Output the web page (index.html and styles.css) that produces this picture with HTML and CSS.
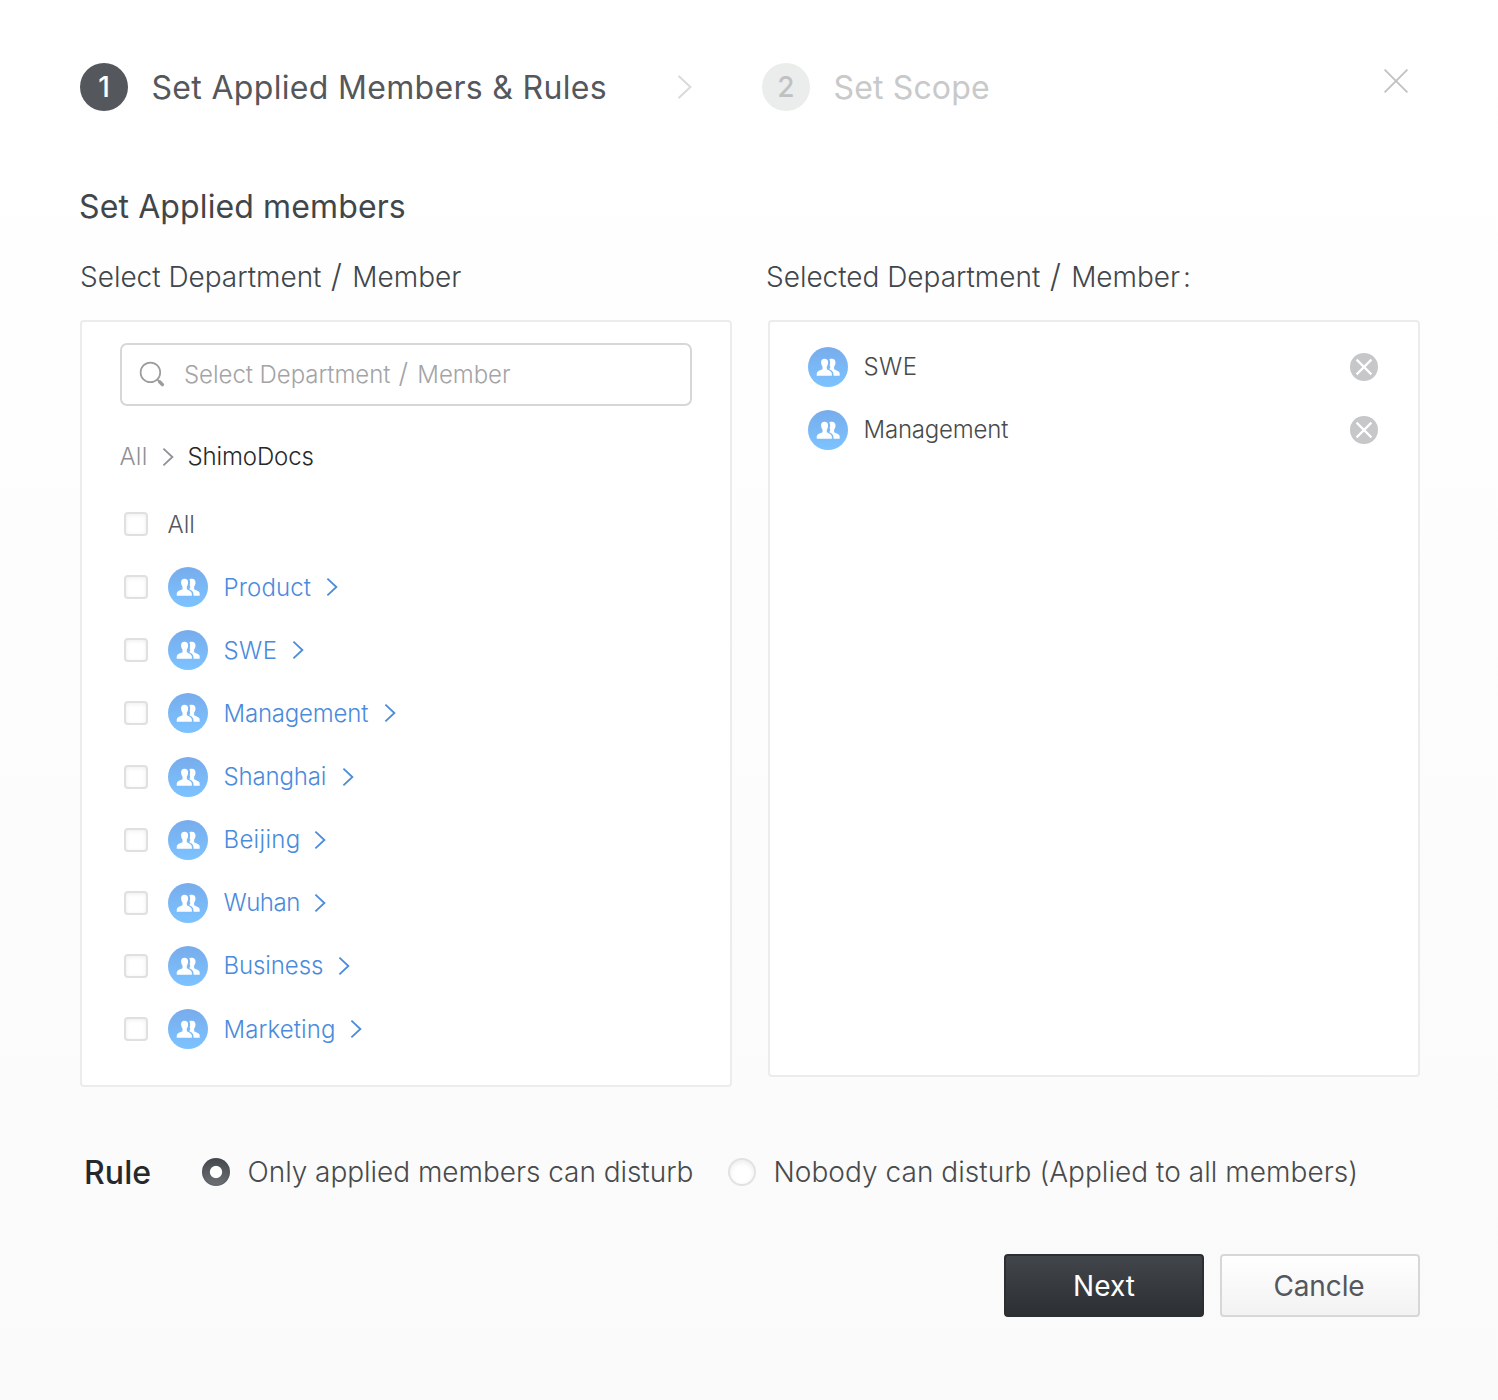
FILE: index.html
```
<!DOCTYPE html>
<html lang="en">
<head>
<meta charset="utf-8">
<title>Set Applied Members &amp; Rules</title>
<link rel="stylesheet" href="styles.css">
</head>
<body>
<svg class="defs" aria-hidden="true">
  <symbol id="chevron" viewBox="0 0 12 20"><path d="M1.4 1.6 10.4 10 1.4 18.4"/></symbol>
  <symbol id="people" viewBox="0 0 40 40">
    <path d="M16.5 11.7c-2.2 0-3.6 1.3-3.4 3.8.1 1.8.6 3 1.4 4.1v2.6c-1.8.9-4.9 1.5-5.6 3.6-.2.6-.2 1.6-.2 3h15.2c0-1.4 0-2.3-.2-2.8-.7-2-3-2.8-4.9-3.8v-2.6c.8-1.1 1.2-2.3 1.3-4.1.2-2.5-1.3-3.8-3.6-3.8z"/>
    <path d="M21.3 12.4c.9-.6 1.9-.6 2.6-.6 2.6.1 3.7 1.6 3.6 3.9-.1 1.8-.6 2.9-1.4 3.9v2.6c1.8 1 4.7 1.6 5.4 3.4.2.6.2 1.8.2 3.2h-6.1c0-3.5-.6-4.5-3.4-6-.8-.5-.9-.9-.4-1.6.9-1.2.3-2-.1-3 .6-2.2.7-4.2-.4-5.8z"/>
  </symbol>
  <symbol id="cross" viewBox="0 0 28 28"><path d="M6.6 6.6 21.4 21.4M21.4 6.6 6.6 21.4"/></symbol>
</svg>
<main class="dialog">
  <header class="steps">
    <div class="step step-current"><span class="num">1</span><span class="title">Set Applied Members &amp; Rules</span></div>
    <svg class="step-arrow" viewBox="0 0 14 24"><path d="M1.2 1.4 12.4 12 1.2 22.6"/></svg>
    <div class="step step-next"><span class="num">2</span><span class="title">Set Scope</span></div>
    <svg class="close" viewBox="0 0 24 24"><path d="M.6.6 23.4 23.4M23.4.6.6 23.4"/></svg>
  </header>

  <h1 class="heading">Set Applied members</h1>

  <div class="columns">
    <section class="column">
      <h2 class="label">Select Department <span class="slash">/</span> Member</h2>
      <div class="panel panel-source">
        <div class="search">
          <svg class="search-icon" viewBox="0 0 26 26"><circle cx="11.4" cy="11.4" r="9.8"/><path d="M18.4 18.6 20.8 20.8"/><path class="handle" d="M20.6 20.8 23.4 23.6"/></svg>
          <span>Select Department <span class="slash">/</span> Member</span>
        </div>
        <nav class="crumbs"><span class="crumb-root">All</span><svg class="chevron"><use href="#chevron"/></svg><span class="crumb-here">ShimoDocs</span></nav>
        <ul class="list">
          <li class="row"><span class="check"></span><span class="name name-all">All</span></li>
          <li class="row"><span class="check"></span><svg class="avatar"><use href="#people"/></svg><span class="name product">Product</span><svg class="chevron"><use href="#chevron"/></svg></li>
          <li class="row"><span class="check"></span><svg class="avatar"><use href="#people"/></svg><span class="name swe">SWE</span><svg class="chevron"><use href="#chevron"/></svg></li>
          <li class="row"><span class="check"></span><svg class="avatar"><use href="#people"/></svg><span class="name management">Management</span><svg class="chevron"><use href="#chevron"/></svg></li>
          <li class="row"><span class="check"></span><svg class="avatar"><use href="#people"/></svg><span class="name shanghai">Shanghai</span><svg class="chevron"><use href="#chevron"/></svg></li>
          <li class="row"><span class="check"></span><svg class="avatar"><use href="#people"/></svg><span class="name beijing">Beijing</span><svg class="chevron"><use href="#chevron"/></svg></li>
          <li class="row"><span class="check"></span><svg class="avatar"><use href="#people"/></svg><span class="name wuhan">Wuhan</span><svg class="chevron"><use href="#chevron"/></svg></li>
          <li class="row"><span class="check"></span><svg class="avatar"><use href="#people"/></svg><span class="name business">Business</span><svg class="chevron"><use href="#chevron"/></svg></li>
          <li class="row"><span class="check"></span><svg class="avatar"><use href="#people"/></svg><span class="name marketing">Marketing</span><svg class="chevron"><use href="#chevron"/></svg></li>
        </ul>
      </div>
    </section>
    <section class="column">
      <h2 class="label label-selected">Selected Department <span class="slash">/</span> Member<span class="colon">:</span></h2>
      <div class="panel panel-selected">
        <ul class="list">
          <li class="row"><svg class="avatar"><use href="#people"/></svg><span class="name swe">SWE</span><svg class="remove"><use href="#cross"/></svg></li>
          <li class="row"><svg class="avatar"><use href="#people"/></svg><span class="name management">Management</span><svg class="remove"><use href="#cross"/></svg></li>
        </ul>
      </div>
    </section>
  </div>

  <div class="rules">
    <strong class="rules-title">Rule</strong>
    <span class="radio radio-on"></span><span class="option option-members">Only applied members can disturb</span>
    <span class="radio"></span><span class="option option-nobody">Nobody can disturb (Applied to all members)</span>
  </div>

  <footer class="actions">
    <button class="button button-primary">Next</button>
    <button class="button button-plain">Cancle</button>
  </footer>
</main>
</body>
</html>
```
FILE: styles.css
```
* { box-sizing: border-box; }
body { margin: 0; font-family: Inter, "Noto Sans", sans-serif; font-weight: 300; }
h1, h2, ul { margin: 0; padding: 0; font-weight: inherit; list-style: none; }
svg { display: block; flex: none; fill: none; }
.defs { position: absolute; width: 0; height: 0; }

.dialog {
  width: 1498px;
  height: 1400px;
  padding: 63px 78px 0 80px;
  background: linear-gradient(#fff, #fafafa);
  white-space: nowrap;
}

/* steps */
.steps { display: flex; align-items: center; height: 48px; }
.step { display: flex; align-items: center; gap: 23.5px; font-size: 32px; font-weight: 400; line-height: 48px; }
.step .title { padding-top: 1px; }
.step-current { width: 598px; color: #54575c; }
.step-current .title { letter-spacing: .32px; }
.step-next { margin-left: 70px; color: #c8c9ca; }
.step-next .title { letter-spacing: .15px; }
.num {
  width: 48px; height: 48px;
  border-radius: 50%;
  text-align: center;
  font-size: 28px;
  font-weight: 500;
}
.step-current .num { background: #54575c; color: #fff; }
.step-next .num { background: #ebeded; color: #bfc1c2; }
.step-arrow { width: 14px; height: 24px; stroke: #d9dadb; stroke-width: 2; stroke-linecap: round; }
.close { width: 24px; height: 24px; margin: -12px 12px 0 auto; stroke: #c0c1c2; stroke-width: 1.8; }

.heading { margin-top: 76px; font-size: 32px; font-weight: 400; line-height: 40px; letter-spacing: .12px; color: #41464b; text-indent: -1px; }

/* member columns */
.columns { display: flex; align-items: flex-start; gap: 36px; height: 830px; margin-top: 30px; margin-bottom: 64px; }
.column { width: 652px; }
.label { height: 63px; font-size: 28px; line-height: 40px; letter-spacing: -.02px; color: #41464b; }
.label-selected { text-indent: -2px; }
.slash { margin: 0 2.5px 0 1.5px; font-size: 1.15em; line-height: 1; }
.colon { margin-left: 3px; }
.panel { border: 2px solid #ebecec; border-radius: 4px; background: #fff; }
.panel-source { height: 767px; padding: 21px 38px; }
.panel-selected { height: 757px; padding: 13px 38px; }

.search {
  display: flex; align-items: center; gap: 19px;
  height: 62.5px;
  padding: 0 17px;
  border: 2px solid #d6d7d8; border-radius: 7px;
  font-size: 24px; letter-spacing: -.05px; color: #a3a4a6;
}
.search-icon { width: 26px; height: 26px; stroke: #9b9c9e; stroke-width: 1.7; }
.search-icon .handle { stroke-width: 3.4; stroke-linecap: round; }

.crumbs { display: flex; align-items: center; height: 32px; margin-top: 35px; font-size: 24px; color: #8f9194; }
.crumb-root { width: 42px; letter-spacing: .2px; text-indent: -.5px; }
.crumbs .chevron { width: 12px; stroke: #8f9194; }
.crumb-here { margin-left: 13.5px; letter-spacing: -.12px; color: #25292c; }
.chevron { width: 12px; height: 20px; stroke: #4a8bdc; stroke-width: 1.8; }

.list { font-size: 24px; }
.panel-source .list { margin-top: 20px; color: #4a8bdc; }
.row { display: flex; align-items: center; height: 63.13px; }
.check {
  width: 24px; height: 24px; margin: 0 20px 0 4px;
  border: 2px solid #e0e0e0; border-radius: 4px;
  background: #fff;
  box-shadow: inset 0 1px 4px rgba(0, 0, 0, .07);
}
.avatar { width: 40px; height: 40px; margin-right: 15.5px; border-radius: 50%; background: linear-gradient(#78acec, #7cc3ff); fill: #fff; }
.name-all { color: #54575c; text-indent: -.5px; }
.panel-selected .list { color: #484a4c; }
.product { width: 102.5px; letter-spacing: .12px; }
.swe { width: 68.5px; letter-spacing: .4px; }
.management { width: 160.5px; letter-spacing: -.2px; }
.shanghai { width: 118.5px; letter-spacing: -.15px; }
.beijing { width: 90.5px; letter-spacing: .3px; }
.wuhan { width: 90.5px; letter-spacing: -.5px; }
.business { width: 114.5px; letter-spacing: -.1px; }
.marketing { width: 126.5px; letter-spacing: .12px; }
.remove { width: 28px; height: 28px; margin-left: auto; margin-right: 2px; border-radius: 50%; background: #c6c7c9; stroke: #fff; stroke-width: 2.2; }

/* rule */
.rules { display: flex; align-items: center; height: 42px; padding-left: 4px; font-size: 28px; color: #484a4c; }
.rules-title { width: 118px; font-size: 32px; font-weight: 500; letter-spacing: .1px; color: #25292c; }
.radio {
  width: 28px; height: 28px;
  border: 2px solid #e2e2e2; border-radius: 50%;
  background: #fff;
  box-shadow: inset 0 2px 5px rgba(0, 0, 0, .08);
}
.radio-on { border: 0; background: radial-gradient(circle, #fff 5.6px, transparent 6.6px), linear-gradient(#44484c, #6d7175); box-shadow: inset 0 0 2px #44484c; }
.option { margin-left: 17.5px; }
.option-members { width: 480.5px; letter-spacing: -.04px; }
.option-nobody { letter-spacing: .04px; }

/* actions */
.actions { display: flex; justify-content: flex-end; gap: 16px; margin-top: 61px; }
.button {
  width: 200px; height: 63px; padding: 0;
  border: 2px solid #2b2f32; border-radius: 4px;
  font: 400 28px/40px Inter, "Noto Sans", sans-serif;
}
.button-primary { background: linear-gradient(#42464b, #2c3033); color: #fff; }
.button-plain { padding-right: 2px; border-color: #d6d7d7; background: linear-gradient(#fff, #f2f2f2); color: #54575c; letter-spacing: -.1px; }
```
